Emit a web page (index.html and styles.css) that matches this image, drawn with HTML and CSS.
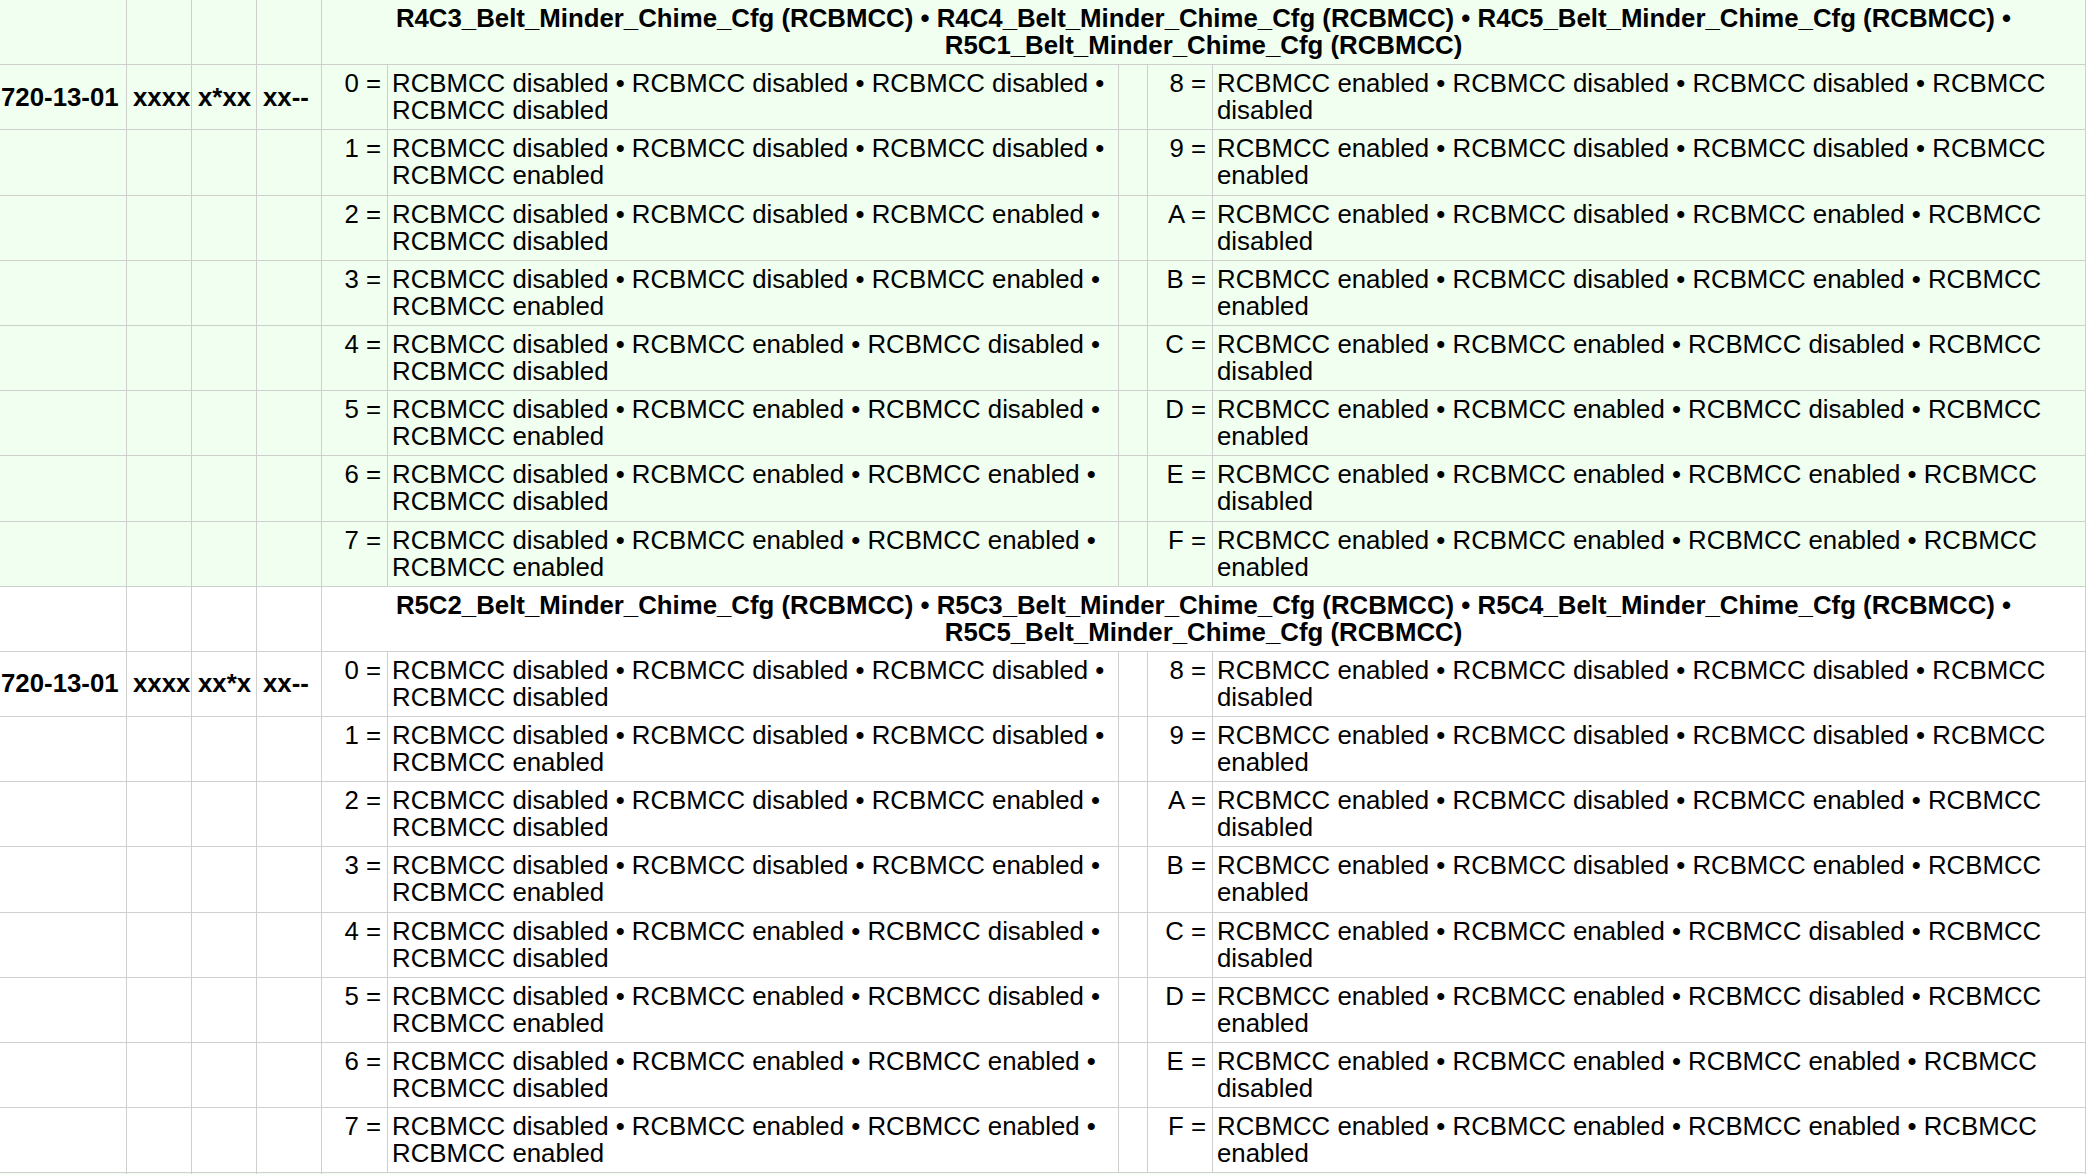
FILE: index.html
```html
<!DOCTYPE html>
<html lang="en">
<head>
<meta charset="utf-8">
<title>RCBMCC As-Built</title>
<link rel="stylesheet" href="styles.css">
</head>
<body>
<div class="viewport">
<table class="grid">
<colgroup>
<col class="c-addr"><col class="c-mask"><col class="c-mask"><col class="c-mask"><col class="c-num"><col class="c-desc"><col class="c-gap"><col class="c-num2"><col class="c-desc2">
</colgroup>
<tbody class="sec sec-green">
<tr class="head"><td></td><td></td><td></td><td></td><td colspan="5" class="title">R4C3_Belt_Minder_Chime_Cfg (RCBMCC) • R4C4_Belt_Minder_Chime_Cfg (RCBMCC) • R4C5_Belt_Minder_Chime_Cfg (RCBMCC) • R5C1_Belt_Minder_Chime_Cfg (RCBMCC)</td></tr>
<tr><td class="addr">720-13-01</td><td class="mask">xxxx</td><td class="mask">x*xx</td><td class="mask">xx--</td><td class="num">0 =</td><td class="desc">RCBMCC disabled • RCBMCC disabled • RCBMCC disabled • RCBMCC disabled</td><td class="gap"></td><td class="num">8 =</td><td class="desc">RCBMCC enabled • RCBMCC disabled • RCBMCC disabled • RCBMCC disabled</td></tr>
<tr><td></td><td></td><td></td><td></td><td class="num">1 =</td><td class="desc">RCBMCC disabled • RCBMCC disabled • RCBMCC disabled • RCBMCC enabled</td><td class="gap"></td><td class="num">9 =</td><td class="desc">RCBMCC enabled • RCBMCC disabled • RCBMCC disabled • RCBMCC enabled</td></tr>
<tr><td></td><td></td><td></td><td></td><td class="num">2 =</td><td class="desc">RCBMCC disabled • RCBMCC disabled • RCBMCC enabled • RCBMCC disabled</td><td class="gap"></td><td class="num">A =</td><td class="desc">RCBMCC enabled • RCBMCC disabled • RCBMCC enabled • RCBMCC disabled</td></tr>
<tr><td></td><td></td><td></td><td></td><td class="num">3 =</td><td class="desc">RCBMCC disabled • RCBMCC disabled • RCBMCC enabled • RCBMCC enabled</td><td class="gap"></td><td class="num">B =</td><td class="desc">RCBMCC enabled • RCBMCC disabled • RCBMCC enabled • RCBMCC enabled</td></tr>
<tr><td></td><td></td><td></td><td></td><td class="num">4 =</td><td class="desc">RCBMCC disabled • RCBMCC enabled • RCBMCC disabled • RCBMCC disabled</td><td class="gap"></td><td class="num">C =</td><td class="desc">RCBMCC enabled • RCBMCC enabled • RCBMCC disabled • RCBMCC disabled</td></tr>
<tr><td></td><td></td><td></td><td></td><td class="num">5 =</td><td class="desc">RCBMCC disabled • RCBMCC enabled • RCBMCC disabled • RCBMCC enabled</td><td class="gap"></td><td class="num">D =</td><td class="desc">RCBMCC enabled • RCBMCC enabled • RCBMCC disabled • RCBMCC enabled</td></tr>
<tr><td></td><td></td><td></td><td></td><td class="num">6 =</td><td class="desc">RCBMCC disabled • RCBMCC enabled • RCBMCC enabled • RCBMCC disabled</td><td class="gap"></td><td class="num">E =</td><td class="desc">RCBMCC enabled • RCBMCC enabled • RCBMCC enabled • RCBMCC disabled</td></tr>
<tr><td></td><td></td><td></td><td></td><td class="num">7 =</td><td class="desc">RCBMCC disabled • RCBMCC enabled • RCBMCC enabled • RCBMCC enabled</td><td class="gap"></td><td class="num">F =</td><td class="desc">RCBMCC enabled • RCBMCC enabled • RCBMCC enabled • RCBMCC enabled</td></tr>
</tbody>
<tbody class="sec sec-white">
<tr class="head"><td></td><td></td><td></td><td></td><td colspan="5" class="title">R5C2_Belt_Minder_Chime_Cfg (RCBMCC) • R5C3_Belt_Minder_Chime_Cfg (RCBMCC) • R5C4_Belt_Minder_Chime_Cfg (RCBMCC) • R5C5_Belt_Minder_Chime_Cfg (RCBMCC)</td></tr>
<tr><td class="addr">720-13-01</td><td class="mask">xxxx</td><td class="mask">xx*x</td><td class="mask">xx--</td><td class="num">0 =</td><td class="desc">RCBMCC disabled • RCBMCC disabled • RCBMCC disabled • RCBMCC disabled</td><td class="gap"></td><td class="num">8 =</td><td class="desc">RCBMCC enabled • RCBMCC disabled • RCBMCC disabled • RCBMCC disabled</td></tr>
<tr><td></td><td></td><td></td><td></td><td class="num">1 =</td><td class="desc">RCBMCC disabled • RCBMCC disabled • RCBMCC disabled • RCBMCC enabled</td><td class="gap"></td><td class="num">9 =</td><td class="desc">RCBMCC enabled • RCBMCC disabled • RCBMCC disabled • RCBMCC enabled</td></tr>
<tr><td></td><td></td><td></td><td></td><td class="num">2 =</td><td class="desc">RCBMCC disabled • RCBMCC disabled • RCBMCC enabled • RCBMCC disabled</td><td class="gap"></td><td class="num">A =</td><td class="desc">RCBMCC enabled • RCBMCC disabled • RCBMCC enabled • RCBMCC disabled</td></tr>
<tr><td></td><td></td><td></td><td></td><td class="num">3 =</td><td class="desc">RCBMCC disabled • RCBMCC disabled • RCBMCC enabled • RCBMCC enabled</td><td class="gap"></td><td class="num">B =</td><td class="desc">RCBMCC enabled • RCBMCC disabled • RCBMCC enabled • RCBMCC enabled</td></tr>
<tr><td></td><td></td><td></td><td></td><td class="num">4 =</td><td class="desc">RCBMCC disabled • RCBMCC enabled • RCBMCC disabled • RCBMCC disabled</td><td class="gap"></td><td class="num">C =</td><td class="desc">RCBMCC enabled • RCBMCC enabled • RCBMCC disabled • RCBMCC disabled</td></tr>
<tr><td></td><td></td><td></td><td></td><td class="num">5 =</td><td class="desc">RCBMCC disabled • RCBMCC enabled • RCBMCC disabled • RCBMCC enabled</td><td class="gap"></td><td class="num">D =</td><td class="desc">RCBMCC enabled • RCBMCC enabled • RCBMCC disabled • RCBMCC enabled</td></tr>
<tr><td></td><td></td><td></td><td></td><td class="num">6 =</td><td class="desc">RCBMCC disabled • RCBMCC enabled • RCBMCC enabled • RCBMCC disabled</td><td class="gap"></td><td class="num">E =</td><td class="desc">RCBMCC enabled • RCBMCC enabled • RCBMCC enabled • RCBMCC disabled</td></tr>
<tr><td></td><td></td><td></td><td></td><td class="num">7 =</td><td class="desc">RCBMCC disabled • RCBMCC enabled • RCBMCC enabled • RCBMCC enabled</td><td class="gap"></td><td class="num">F =</td><td class="desc">RCBMCC enabled • RCBMCC enabled • RCBMCC enabled • RCBMCC enabled</td></tr>
</tbody>
<tbody class="sec sec-green">
<tr class="head"><td></td><td></td><td></td><td></td><td colspan="5" class="title">&nbsp;<br>&nbsp;</td></tr>
</tbody>
</table>
</div>
</body>
</html>
```
FILE: styles.css
```css
html, body {
  margin: 0;
  padding: 0;
  background: #ffffff;
}

body {
  font-family: "Liberation Sans", Arial, Helvetica, sans-serif;
  color: #000000;
}

.viewport {
  width: 2100px;
  height: 1174px;
  overflow: hidden;
}

.grid {
  border-collapse: collapse;
  table-layout: fixed;
  width: 2095px;
  margin-left: -10px;
  margin-top: -1px;
  font-size: 25.8px;
  line-height: 27px;
}

.c-addr { width: 136px; }
.c-mask { width: 65px; }
.c-num { width: 66px; }
.c-desc { width: 731px; }
.c-gap { width: 29px; }
.c-num2 { width: 65px; }
.c-desc2 { width: 873px; }

.grid td {
  border: 1px solid #cdd0cd;
  padding: 5px 6px;
  vertical-align: top;
  height: 54.2px;
}

.sec-green td {
  background: #f0fff0;
}

.sec-white td {
  background: #ffffff;
}

.title {
  text-align: center;
  vertical-align: middle;
  font-weight: bold;
}

.grid td.addr,
.grid td.mask {
  font-weight: bold;
  vertical-align: middle;
  white-space: nowrap;
}

.grid td.addr {
  padding-left: 10px;
  padding-right: 2px;
}

.grid td.num {
  text-align: right;
  white-space: nowrap;
  padding-right: 6px;
}

.grid td.desc {
  padding-left: 4px;
  padding-right: 4px;
}
```
